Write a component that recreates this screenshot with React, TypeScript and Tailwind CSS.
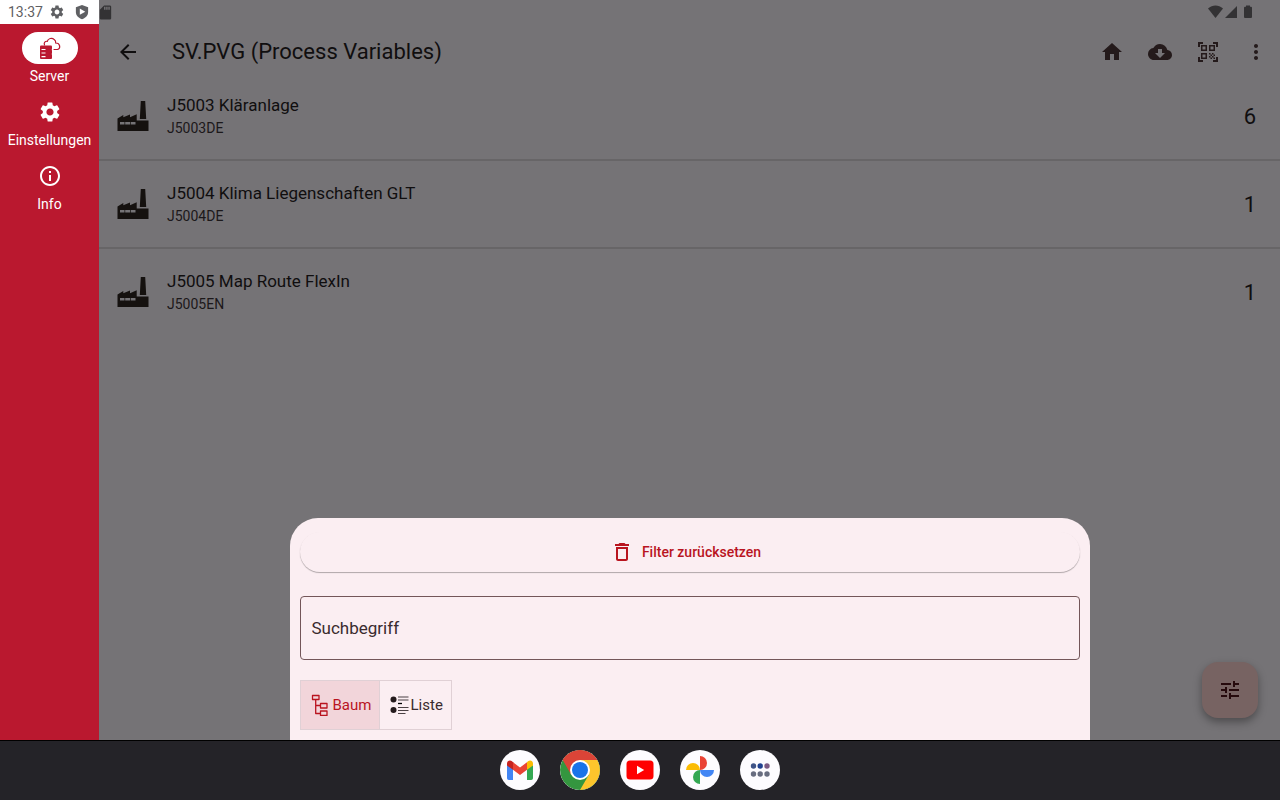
import type { ReactNode } from "react";
import {
  MdArrowBack,
  MdCloudDownload,
  MdDeleteOutline,
  MdHome,
  MdMoreVert,
  MdOutlineInfo,
  MdQrCodeScanner,
  MdSdCard,
  MdSettings,
  MdTune,
} from "react-icons/md";

const plants = [
  { name: "J5003 Kläranlage", code: "J5003DE", count: 6 },
  { name: "J5004 Klima Liegenschaften GLT", code: "J5004DE", count: 1 },
  { name: "J5005 Map Route FlexIn", code: "J5005EN", count: 1 },
];

function ShieldIcon() {
  return (
    <svg viewBox="0 0 16 18" className="h-4 w-[14px]" aria-hidden="true">
      <path d="M8 1 15 3.600V9c0 4-2.900 6.900-7 8.300C3.900 15.900 1 13 1 9V3.600z" fill="#5f6063" />
      <path d="M5.500 5v7.200L11.700 8.600z" fill="#fff" />
    </svg>
  );
}

// Wifi, signal and battery glyphs of the status bar
function StatusIcons() {
  return (
    <svg viewBox="0 0 46 16" className="h-4 w-[46px]" fill="#333234" aria-hidden="true">
      <path d="M0 4.500C4.500.6 10.500.6 15 4.500L7.500 14z" />
      <path d="M17 14 29 2v12z" />
      <path d="M38 1.500h4v1.300h1a1 1 0 0 1 1 1V13a1 1 0 0 1-1 1h-6a1 1 0 0 1-1-1V3.800a1 1 0 0 1 1-1h1z" />
    </svg>
  );
}

function ServerCloudIcon() {
  return (
    <svg viewBox="0 0 24 24" className="size-6" fill="none" aria-hidden="true">
      <path
        d="M6.500 9C5.500 6.500 7.300 5 9.300 5.300 10 2.500 14 1.300 16.200 3.600c1.300 1 1.700 2 1.500 3.400 4.700 0 5.200 5.600 1.800 6.500h-3.500"
        stroke="#ba182f"
        strokeWidth="1.200"
        strokeLinecap="round"
      />
      <rect x="2" y="9.500" width="12" height="13.500" rx="1" fill="#ba182f" />
      <path d="M3.500 13.500h4M3.500 17h4M3.500 20.700h4" stroke="#fff" strokeWidth="1.200" />
      <path d="M1.500 11.600v2.600M1.500 16v2.600M14.300 12.800v1.600M14.300 17.200v1.600" stroke="#fff" />
    </svg>
  );
}

function FactoryIcon() {
  return (
    <svg viewBox="0 0 32 32" className="size-8 shrink-0" aria-hidden="true">
      <path
        d="M.5 31V18.500l5.800-3.500v2.300L13 14.500v2.800l6.700-3V20.500H31.500V31zM23.800 1h4.400l1 18h-6.400z"
        fill="#15110f"
      />
      <path d="M3 22h4.500v2.600H3zM8.200 22h4.800v2.600H8.200zM13.700 22h4.800v2.600h-4.800z" fill="#757376" />
    </svg>
  );
}

function TreeIcon() {
  return (
    <svg
      viewBox="0 0 18 22"
      className="h-[22px] w-[18px]"
      fill="none"
      stroke="#b9141f"
      strokeWidth="1.300"
      strokeLinejoin="round"
      aria-hidden="true"
    >
      <path d="M1.500 1.500H8v4H1.500zM9.500 9.500H16v4.500H9.500zM9.500 17H16v4.500H9.500zM4.700 5.500v14h4.800M4.700 11.500h4.800" />
    </svg>
  );
}

function ListIcon() {
  return (
    <svg viewBox="0 0 20 20" className="size-5" aria-hidden="true">
      <circle cx="3.500" cy="4.500" r="3" fill="#241a1c" />
      <circle cx="3.500" cy="15" r="3" fill="#241a1c" />
      <path
        d="M8 2H18.500M8 5H18.500M8 12.500H18.500M8 15.500H18.500M8 18.500H15.500"
        stroke="#4b4144"
        strokeWidth="1.200"
      />
      <path d="M8 8.500h4" stroke="#000" strokeWidth="1.300" />
    </svg>
  );
}

function GmailLogo() {
  return (
    <svg viewBox="0 0 28 22" className="h-[22px] w-7" aria-hidden="true">
      <path d="M1 6v13.200A1.800 1.800 0 0 0 2.800 21H7V9z" fill="#4285f4" />
      <path d="M27 6v13.200a1.800 1.800 0 0 1-1.800 1.800H21V9z" fill="#34a853" />
      <path d="M7 10.800V3.200l7 5.300 7-5.300v7.600L14 16z" fill="#ea4335" />
      <path d="M1 4.500C1 1.500 4.300.8 6 2.300l1 .9v7.600L1 6.500z" fill="#c5221f" />
      <path d="M27 4.500C27 1.500 23.700.8 22 2.300l-1 .9v7.600l6-4.300z" fill="#fbbc04" />
    </svg>
  );
}

function ChromeLogo() {
  return (
    <svg viewBox="0 0 40 40" className="size-10" aria-hidden="true">
      <circle cx="20" cy="20" r="20" fill="#34963f" />
      <path d="M20 20 2.700 10A20 20 0 0 1 37.300 10z" fill="#db4437" />
      <path d="M20 10h17.300A20 20 0 0 1 20 40l8.700-15z" fill="#fdc52c" />
      <path d="M2.700 10A20 20 0 0 1 37.300 10H20L11.300 25z" fill="#db4437" />
      <circle cx="20" cy="20" r="10" fill="#fff" />
      <circle cx="20" cy="20" r="8" fill="#1a73e8" />
    </svg>
  );
}

function YoutubeLogo() {
  return (
    <svg viewBox="0 0 28 20" className="h-5 w-7" aria-hidden="true">
      <rect x=".5" y=".5" width="27" height="19" rx="3.500" fill="#f00" />
      <path d="M11 5.800v8.400l7.200-4.200z" fill="#fff" />
    </svg>
  );
}

function PhotosLogo() {
  return (
    <svg viewBox="0 0 30 30" className="size-[30px]" aria-hidden="true">
      <path d="M15 1a7 7 0 0 1 0 14z" fill="#ea4335" />
      <path d="M29 15a7 7 0 0 1-14 0z" fill="#4285f4" />
      <path d="M15 29a7 7 0 0 1 0-14z" fill="#34a853" />
      <path d="M1 15a7 7 0 0 1 14 0z" fill="#fbbc04" />
    </svg>
  );
}

function AppsLogo() {
  return (
    <svg viewBox="0 0 20 14" className="h-[14px] w-5" aria-hidden="true">
      <circle cx="3.500" cy="3" r="2.700" fill="#3e5387" />
      <circle cx="10.200" cy="3" r="2.700" fill="#214290" />
      <circle cx="17" cy="3" r="2.700" fill="#7c5a83" />
      <circle cx="3.500" cy="11" r="2.700" fill="#686d80" />
      <circle cx="10.200" cy="11" r="2.700" fill="#686d80" />
      <circle cx="17" cy="11" r="2.700" fill="#686d80" />
    </svg>
  );
}

function NavItem({ label, active, children }: { label: string; active?: boolean; children: ReactNode }) {
  return (
    <a
      href="#"
      aria-current={active ? "page" : undefined}
      className="flex flex-col items-center text-sm leading-6 text-white"
    >
      <span className={`flex h-8 w-14 items-center justify-center rounded-full ${active ? "bg-white" : ""}`}>
        {children}
      </span>
      {label}
    </a>
  );
}

function DockApp({ label, children }: { label: string; children: ReactNode }) {
  return (
    <button
      type="button"
      aria-label={label}
      className="flex size-10 items-center justify-center overflow-hidden rounded-full bg-[#fdfcff]"
    >
      {children}
    </button>
  );
}

export default function App() {
  return (
    <div className="flex h-screen flex-col font-[Roboto,sans-serif]">
      <div className="flex min-h-0 flex-1">
        {/* Navigation rail */}
        <aside className="flex w-[99px] shrink-0 flex-col bg-[#ba182f]">
          <div className="flex h-6 items-center bg-white pl-2 text-[#5f6063]">
            <span className="w-[41px] text-sm">13:37</span>
            <MdSettings className="size-4" />
            <span className="ml-[10px]">
              <ShieldIcon />
            </span>
          </div>
          <nav className="flex flex-col gap-2 pt-2">
            <NavItem label="Server" active>
              <ServerCloudIcon />
            </NavItem>
            <NavItem label="Einstellungen">
              <MdSettings className="size-6" />
            </NavItem>
            <NavItem label="Info">
              <MdOutlineInfo className="size-6" />
            </NavItem>
          </nav>
        </aside>

        <main className="relative flex min-w-0 flex-1 flex-col bg-[#757376] text-[#100e0f]">
          <div className="flex h-6 items-center justify-between pr-[26px] text-[#333234]">
            <MdSdCard className="-ml-0.5 size-[17px]" />
            <StatusIcons />
          </div>

          <header className="flex h-12 items-center pt-2 pr-3 pl-[17px]">
            <button type="button" aria-label="Zurück" className="mr-8 flex size-6 items-center justify-center">
              <MdArrowBack className="size-6" />
            </button>
            <h1 className="flex-1 text-[22px] leading-7">SV.PVG (Process Variables)</h1>
            <div className="flex gap-6 text-[#241a1b]">
              <button type="button" aria-label="Startseite">
                <MdHome className="size-6" />
              </button>
              <button type="button" aria-label="Herunterladen">
                <MdCloudDownload className="size-6" />
              </button>
              <button type="button" aria-label="QR-Code scannen">
                <MdQrCodeScanner className="size-6" />
              </button>
              <button type="button" aria-label="Mehr">
                <MdMoreVert className="size-6" />
              </button>
            </div>
          </header>

          {/* Plants */}
          <ul className="pt-px">
            {plants.map((plant) => (
              <li
                key={plant.code}
                className="flex h-[88px] items-center gap-[18px] border-b-2 border-[#676567] pr-6 pl-[18px] last:border-transparent"
              >
                <FactoryIcon />
                <div className="flex-1">
                  <div className="text-[17px] leading-6">{plant.name}</div>
                  <div className="text-sm leading-[22px] text-[#1c181a]">{plant.code}</div>
                </div>
                <span className="text-[22px]">{plant.count}</span>
              </li>
            ))}
          </ul>

          <button
            type="button"
            aria-label="Filter"
            className="absolute right-[22px] bottom-[22px] flex size-14 items-center justify-center rounded-2xl bg-[#776362] text-[#260a0c] shadow-[0_4px_8px_rgba(0,0,0,0.35)]"
          >
            <MdTune className="size-6" />
          </button>

          {/* Filter sheet */}
          <section className="absolute inset-x-0 bottom-0 mx-auto flex max-w-[800px] flex-col rounded-t-[28px] bg-[#fbeef2] px-[10px] pt-[14px] pb-[10px]">
            <button
              type="button"
              className="flex h-10 items-center justify-center gap-2 rounded-full pr-2 text-sm font-medium text-[#b9141f] shadow-[0_1px_1px_rgba(0,0,0,0.3)]"
            >
              <MdDeleteOutline className="size-6" />
              Filter zurücksetzen
            </button>
            <input
              type="text"
              aria-label="Suchbegriff"
              placeholder="Suchbegriff"
              className="mt-6 h-16 w-full rounded border border-[#735659] px-[11px] text-[17px] text-[#3a2b2e] outline-none placeholder:text-[#3a2b2e]"
            />
            <div className="mt-5 flex h-[50px] w-[152px] border border-[#e0d0d5] text-[15px]">
              <button
                type="button"
                aria-pressed="true"
                className="flex w-[79px] items-center gap-1 border-r border-[#e0d0d5] bg-[#f2d5da] pl-[10px] text-[#b9141f]"
              >
                <TreeIcon />
                Baum
              </button>
              <button
                type="button"
                aria-pressed="false"
                className="flex flex-1 items-center gap-px pl-[10px] text-[#3a2b2e]"
              >
                <ListIcon />
                Liste
              </button>
            </div>
          </section>
        </main>
      </div>

      {/* Dock */}
      <footer className="flex h-[60px] shrink-0 items-center justify-center gap-5 border-t border-black bg-[#242328] pb-px">
        <DockApp label="Gmail">
          <GmailLogo />
        </DockApp>
        <DockApp label="Chrome">
          <ChromeLogo />
        </DockApp>
        <DockApp label="YouTube">
          <YoutubeLogo />
        </DockApp>
        <DockApp label="Fotos">
          <PhotosLogo />
        </DockApp>
        <DockApp label="Alle Apps">
          <AppsLogo />
        </DockApp>
      </footer>
    </div>
  );
}
